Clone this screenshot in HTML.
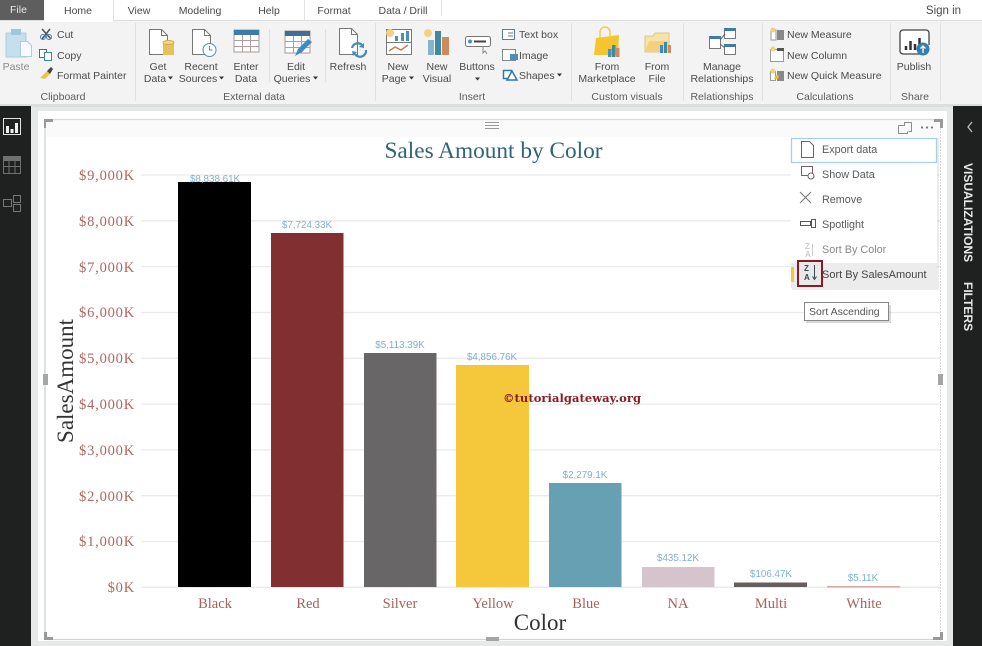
<!DOCTYPE html>
<html><head><meta charset="utf-8">
<style>
html,body{margin:0;padding:0;background:#fff;width:982px;height:646px;overflow:hidden}
svg{display:block;filter:blur(.3px)}
text{font-family:"Liberation Sans",sans-serif}
.r{font-size:10.5px;fill:#4a4a4a;text-anchor:middle}
.l{font-size:10.5px;fill:#4a4a4a}
.g{font-size:10.5px;fill:#5c5c5c;text-anchor:middle}
.t{font-size:10.5px;fill:#4a4a4a;text-anchor:middle}
.y{font-family:"Liberation Serif",serif;font-size:14.5px;letter-spacing:.8px;fill:#b0655d;text-anchor:end}
.x{font-family:"Liberation Serif",serif;font-size:14.5px;fill:#a9605a;text-anchor:middle}
.d{font-size:9.8px;fill:#7fb0cf;text-anchor:middle}
.m{font-size:10.8px;fill:#5a5a5a}
</style></head><body>
<svg width="982" height="646" viewBox="0 0 982 646" xmlns="http://www.w3.org/2000/svg">
<rect width="982" height="646" fill="#e7e9e8"/>
<!-- tabs -->
<rect width="982" height="20" fill="#fff"/>
<rect width="44" height="20" fill="#5e5e5e"/>
<text x="10" y="13" fill="#e8e8e8" style="font-size:10.5px">File</text>
<path d="M113.500 20V0M304.500 20V0M441.500 16V0" stroke="#e2e2e2"/>
<text class="t" x="78" y="14">Home</text><text class="t" x="139" y="14">View</text><text class="t" x="200" y="14">Modeling</text><text class="t" x="269" y="14">Help</text><text class="t" x="334" y="14">Format</text><text class="t" x="403" y="14">Data / Drill</text><text class="t" x="943.500" y="14" style="font-size:11.500px">Sign in</text>
<!-- ribbon -->
<rect y="20" width="982" height="84" fill="#f3f3f3"/>
<rect x="44" y="19" width="69" height="3" fill="#fff"/>
<path d="M0 20.500H44M113 20.500H982" stroke="#dedede"/>
<rect y="104" width="982" height="3" fill="#dcdedd"/>
<path d="M135.500 23V101M375.500 23V101M571.500 23V101M683.500 23V101M762.500 23V101M890.500 23V101M940.500 23V101M269.500 29V82M325.500 29V82" stroke="#e0e0e0"/>
<!-- paste -->
<rect x="6" y="33" width="20" height="24" fill="#c5dfec" stroke="#a9cfe2"/><rect x="11" y="29" width="10" height="6" fill="#9fc8dc"/><path d="M20.500 41.500h7l4 4v11h-11z" fill="#f7fbfd" stroke="#a9cfe2"/>
<text class="g" x="16" y="70" style="fill:#8a8a8a">Paste</text>
<path d="M42 29l9 10M50 29l-8 10" stroke="#555" stroke-width="1.600" fill="none"/><circle cx="43" cy="37" r="2.500" fill="none" stroke="#3f83b5"/><circle cx="49" cy="37" r="2.500" fill="none" stroke="#3f83b5"/>
<text class="l" x="57" y="38">Cut</text>
<rect x="39.500" y="49.500" width="7" height="8" fill="#fff" stroke="#666"/><rect x="44.500" y="52.500" width="7" height="8" fill="#fff" stroke="#3f83b5"/>
<text class="l" x="57" y="59">Copy</text>
<path d="M40 78l7-7 3 3-5 5z" fill="#ecc24a"/><path d="M47 71l4-4 2 2-3 5z" fill="#444"/>
<text class="l" x="57" y="79">Format Painter</text>
<text class="g" x="63" y="100">Clipboard</text>
<!-- get data -->
<path d="M149.500 29.500h12l6 6v19h-18z" fill="#fff" stroke="#777"/><path d="M161.500 29.500v6h6" fill="none" stroke="#777"/><rect x="163" y="42" width="11" height="13" fill="#e8c15f"/><ellipse cx="168.500" cy="42.500" rx="5.500" ry="2" fill="#f3d98f" stroke="#d5aa44"/>
<text class="r" x="158" y="70">Get</text><text class="r" x="155" y="82">Data</text><path d="M168 76.500h5l-2.500 3z" fill="#333"/>
<path d="M192.500 29.500h12l6 6v19h-18z" fill="#fff" stroke="#777"/><path d="M204.500 29.500v6h6" fill="none" stroke="#777"/><circle cx="209.500" cy="50" r="6.500" fill="#fff" stroke="#4a90bd"/><path d="M209.500 46v4h3" stroke="#4a90bd" fill="none"/>
<text class="r" x="201" y="70">Recent</text><text class="r" x="198" y="82">Sources</text><path d="M219 76.500h5l-2.500 3z" fill="#333"/>
<rect x="234" y="30" width="25" height="22" fill="#fff" stroke="#a89a9a"/><rect x="234" y="30" width="25" height="5" fill="#3f7ba6"/><path d="M234 40.500h25M234 46.500h25M242.500 35v17M250.500 35v17" stroke="#b49c9c"/>
<text class="r" x="246" y="70">Enter</text><text class="r" x="246" y="82">Data</text>
<rect x="285" y="31" width="25" height="22" fill="#fff" stroke="#a89a9a"/><rect x="285" y="31" width="25" height="5" fill="#3f6f94"/><path d="M285 41.500h25M285 47.500h25M293.500 36v17M301.500 36v17" stroke="#b49c9c"/><path d="M295 56l3-7 10-10 4 3-10 10z" fill="#3f8ac0"/>
<text class="r" x="296" y="70">Edit</text><text class="r" x="292" y="82">Queries</text><path d="M313 76.500h5l-2.500 3z" fill="#333"/>
<text class="g" x="254" y="100">External data</text>
<!-- refresh -->
<path d="M339.500 28.500h12l6 6v20h-18z" fill="#fff" stroke="#777"/><path d="M351.500 28.500v6h6" fill="none" stroke="#777"/>
<path d="M352 48a6 6 0 0 1 10-3M366 50a6 6 0 0 1-11 4" stroke="#3f8fb8" stroke-width="2.200" fill="#fff" fill-opacity="0"/><path d="M359 47l5 1 0-5zM357 52l-5-1 1 5z" fill="#3f8fb8"/>
<text class="r" x="348" y="70">Refresh</text>
<!-- new page -->
<rect x="386.500" y="29.500" width="25" height="25" fill="#fff" stroke="#777"/><path d="M386 42.500h25" stroke="#777"/><circle cx="390" cy="33" r="4" fill="#f3d184"/><path d="M395 41v-5h3v5zM401 41v-8h3v8zM406 41v-10h3v10z" fill="#4a90bd"/><path d="M389 51l6-4 6 3 7-5" stroke="#c67f55" stroke-width="1.500" fill="none"/>
<text class="r" x="398" y="70">New</text><text class="r" x="394" y="82">Page</text><path d="M409 76.500h5l-2.500 3z" fill="#333"/>
<circle cx="428" cy="33" r="4" fill="#f3d184"/><rect x="428" y="40" width="6" height="15" fill="#84b4cf"/><rect x="435" y="31" width="6" height="24" fill="#3f8a9f"/><rect x="442" y="37" width="7" height="18" fill="#cf8a5f"/>
<text class="r" x="437" y="70">New</text><text class="r" x="437" y="82">Visual</text>
<rect x="465.500" y="36.500" width="25" height="10" rx="2" fill="#fff" stroke="#777"/><circle cx="470" cy="41.500" r="2" fill="#4a90bd"/><path d="M474 41.500h12" stroke="#444" stroke-width="2"/><path d="M483 46v7l2-2 2 3" stroke="#888" fill="none"/>
<text class="r" x="477" y="70">Buttons</text><path d="M475 77.500h5l-2.500 3z" fill="#333"/>
<rect x="502.500" y="29.500" width="12" height="10" fill="#fff" stroke="#5a7f99"/><path d="M508 33h5M508 36h5" stroke="#777"/><text class="l" x="519" y="38">Text box</text>
<rect x="502.500" y="49.500" width="13" height="11" fill="#fff" stroke="#888"/><rect x="510" y="54" width="8" height="6" fill="#4a90bd"/><text class="l" x="519" y="59">Image</text>
<rect x="503.500" y="70.500" width="8" height="8" fill="#fff" stroke="#2f78a8" stroke-width="1.500"/><path d="M507 80l5-9 5 9z" fill="#fff" stroke="#2f78a8" stroke-width="1.500"/><text class="l" x="519" y="79">Shapes</text><path d="M557 73.500h5l-2.500 3z" fill="#333"/>
<text class="g" x="472" y="100">Insert</text>
<!-- from marketplace -->
<path d="M596 38l23-3-1 20h-24z" fill="#f4c52e"/><path d="M600 38v-6a5 5 0 0 1 10 0v5" stroke="#f0cb55" fill="none" stroke-width="1.500"/><rect x="608" y="49" width="3.500" height="8" fill="#4a90bd"/><rect x="612" y="45" width="3.500" height="12" fill="#3f8a9f"/><rect x="616" y="48" width="3.500" height="9" fill="#cf8a5f"/>
<text class="r" x="607" y="70">From</text><text class="r" x="607" y="82">Marketplace</text>
<path d="M645 52V36h8l2-3h14v19z" fill="#f7e2a8" stroke="#d8c48a"/><path d="M645 52l4-11h21l-2 11z" fill="#f4cf7d"/><rect x="660" y="45" width="3" height="8" fill="#3f8ac0"/><rect x="664" y="42" width="3" height="11" fill="#3f8a9f"/><rect x="668" y="45" width="3" height="8" fill="#cf8a5f"/>
<text class="r" x="657" y="70">From</text><text class="r" x="657" y="82">File</text>
<text class="g" x="627" y="100">Custom visuals</text>
<!-- manage rel -->
<rect x="709.500" y="36.500" width="11" height="12" fill="#fff" stroke="#777"/><rect x="709" y="36" width="12" height="3" fill="#3f7ba6"/>
<rect x="724.500" y="28.500" width="11" height="10" fill="#fff" stroke="#777"/><rect x="724" y="28" width="12" height="3" fill="#3f7ba6"/>
<rect x="724.500" y="44.500" width="11" height="10" fill="#fff" stroke="#777"/><rect x="724" y="44" width="12" height="3" fill="#3f7ba6"/>
<path d="M720 40l5-6M720 44l5 4" stroke="#666"/>
<text class="r" x="722" y="70">Manage</text><text class="r" x="722" y="82">Relationships</text>
<text class="g" x="722" y="100">Relationships</text>
<!-- calculations -->
<rect x="771" y="30" width="5" height="10" fill="#fff" stroke="#999"/><rect x="777" y="30" width="7" height="10" fill="#888"/><circle cx="773" cy="30" r="2.500" fill="#f0d27c"/><text class="l" x="787" y="38">New Measure</text>
<rect x="770.500" y="49.500" width="13" height="12" fill="#fff" stroke="#999"/><rect x="777" y="48" width="7" height="3" fill="#555"/><circle cx="773" cy="49" r="2.500" fill="#f0d27c"/><text class="l" x="787" y="59">New Column</text>
<rect x="770.500" y="71.500" width="5" height="9" fill="#fff" stroke="#999"/><rect x="777" y="71" width="7" height="10" fill="#888"/><path d="M774 79l3-5 1 2 2-3-2 6z" fill="#eeba2e"/><circle cx="773" cy="71" r="2.500" fill="#f0d27c"/><text class="l" x="787" y="79">New Quick Measure</text>
<text class="g" x="825" y="100">Calculations</text>
<!-- publish -->
<path d="M921 54h-18a3 3 0 0 1-3-3V33a3 3 0 0 1 3-3h23a3 3 0 0 1 3 3v12" fill="#fff" stroke="#444" stroke-width="1.300"/><path d="M906 50v-4M910.500 50v-9M915 50v-6M919.500 50v-12" stroke="#333" stroke-width="2.500"/><circle cx="923" cy="49" r="6.500" fill="#2f7fb5"/><path d="M923 53v-7M920.500 48.500l2.500-2.500 2.500 2.500" stroke="#fff" stroke-width="1.300" fill="none"/>
<text class="r" x="914" y="70">Publish</text><text class="g" x="915" y="100">Share</text>
<!-- left nav -->
<rect y="106" width="31" height="540" fill="#1f2120"/>
<rect x="3.500" y="118.500" width="17" height="16" fill="none" stroke="#e3e3e3"/><path d="M6 133v-7h3v7zM10.500 133v-4h3v4zM15 133v-10h3v10z" fill="#eee"/>
<rect x="3.500" y="156.500" width="17" height="17" fill="none" stroke="#6f6f6f"/><rect x="3" y="156" width="18" height="5" fill="#707070"/><path d="M3 166.500h18M9 161v13M15 161v13" stroke="#6f6f6f"/>
<rect x="3.500" y="199.500" width="8" height="7" fill="none" stroke="#777"/><rect x="13.500" y="195.500" width="7" height="7" fill="none" stroke="#777"/><rect x="13.500" y="204.500" width="7" height="7" fill="none" stroke="#777"/>
<!-- right pane -->
<rect x="953" y="106" width="29" height="540" fill="#1f2120"/>
<path d="M972 122l-4 5 4 5" stroke="#bdbdbd" stroke-width="1.300" fill="none"/>
<text transform="translate(964 163) rotate(90)" font-weight="bold" fill="#e8e8e8" style="font-size:12px">VISUALIZATIONS</text>
<text transform="translate(964 282) rotate(90)" font-weight="bold" fill="#e8e8e8" style="font-size:12px">FILTERS</text>
<!-- canvas -->
<rect x="38" y="111" width="909" height="530" fill="#fff"/>
<rect x="46" y="120" width="894" height="17" fill="#fafafa"/>
<path d="M45 119.500H940.500" stroke="#dcdcdc" stroke-width="1.300"/>
<path d="M45 119V639" stroke="#dde2e2" stroke-width="2"/>
<path d="M45 639.500H940.500" stroke="#d8d2ce" stroke-width="1.300"/>
<path d="M940.500 119V639" stroke="#d8d6d4" stroke-width="1" stroke-dasharray="2 1"/>
<path d="M46 128v-6h7v-3h-9v9z" fill="#999"/><path d="M934 122h6v6h3v-9h-9z" fill="#999"/><path d="M44 632v8h9v-3h-6v-5z" fill="#999"/><path d="M933 637h7v-5h3v8h-10z" fill="#999"/>
<rect x="43" y="374" width="5" height="11" fill="#a5a5a5"/><rect x="938" y="374" width="5" height="11" fill="#a5a5a5"/><rect x="486" y="637" width="13" height="4" fill="#a5a5a5"/>
<path d="M485 122.500h14M485 125.500h14M485 128.500h14" stroke="#999"/>
<path d="M898.500 125.500h6v-3h7v9h-3M898.500 125.500v8h9v-2" fill="none" stroke="#8d8d8d"/>
<circle cx="922" cy="127.500" r="1.100" fill="#777"/><circle cx="927" cy="127.500" r="1.100" fill="#777"/><circle cx="932" cy="127.500" r="1.100" fill="#777"/>
<!-- gridlines -->
<g stroke="#eaeaea" stroke-width="1.300">
<path d="M141 175H940M141 220.800H940M141 266.600H940M141 312.500H940M141 358.300H940M141 404.100H940M141 449.900H940M141 495.700H940M141 541.500H940M141 587.300H940"/>
</g>
<text x="493.500" y="158" text-anchor="middle" fill="#2f6479" style="font-family:'Liberation Serif',serif;font-size:23.300px">Sales Amount by Color</text>
<g>
<text class="y" x="135" y="180">$9,000K</text><text class="y" x="135" y="226">$8,000K</text><text class="y" x="135" y="272">$7,000K</text><text class="y" x="135" y="317">$6,000K</text><text class="y" x="135" y="363">$5,000K</text><text class="y" x="135" y="409">$4,000K</text><text class="y" x="135" y="455">$3,000K</text><text class="y" x="135" y="501">$2,000K</text><text class="y" x="135" y="546">$1,000K</text><text class="y" x="135" y="592">$0K</text>
</g>
<text transform="translate(73 381) rotate(-90)" text-anchor="middle" fill="#333" style="font-family:'Liberation Serif',serif;font-size:23px">SalesAmount</text>
<!-- bars -->
<rect x="178" y="182" width="73" height="405" fill="#000"/>
<rect x="271" y="233" width="72.500" height="354" fill="#822f32"/>
<rect x="364" y="353" width="72.500" height="234" fill="#686666"/>
<rect x="456" y="365" width="73" height="222" fill="#f5c73b"/>
<rect x="549" y="483" width="72.500" height="104" fill="#66a0b2"/>
<rect x="642" y="567" width="72.500" height="20" fill="#d6c4cd"/>
<rect x="734" y="582.500" width="73" height="4.500" fill="#685e5e"/>
<rect x="827" y="586" width="73" height="1.500" fill="#d9a89e"/>
<text class="d" x="215" y="182">$8,838.61K</text><text class="d" x="307" y="228">$7,724.33K</text><text class="d" x="400" y="348">$5,113.39K</text><text class="d" x="492" y="360">$4,856.76K</text><text class="d" x="585" y="478">$2,279.1K</text><text class="d" x="678" y="561">$435.12K</text><text class="d" x="771" y="577">$106.47K</text><text class="d" x="863" y="581">$5.11K</text>
<text class="x" x="215" y="608">Black</text><text class="x" x="308" y="608">Red</text><text class="x" x="400" y="608">Silver</text><text class="x" x="493" y="608">Yellow</text><text class="x" x="586" y="608">Blue</text><text class="x" x="678" y="608">NA</text><text class="x" x="771" y="608">Multi</text><text class="x" x="864" y="608">White</text>
<text x="540" y="630" text-anchor="middle" fill="#333" style="font-family:'Liberation Serif',serif;font-size:23px">Color</text>
<text x="503" y="402" fill="#8a1c24" textLength="138" style="font-family:'DejaVu Serif',serif;font-size:11.500px;font-weight:bold">©tutorialgateway.org</text>
<!-- menu -->
<rect x="792" y="138" width="147" height="152" fill="#000" opacity=".07"/>
<rect x="791" y="137" width="146" height="151" fill="#fff"/>
<rect x="791.500" y="138.500" width="145" height="24" fill="#fff" stroke="#a9d0e6" stroke-width="1.300"/>
<rect x="791" y="263" width="146" height="25" fill="#ececec"/>
<path d="M801.500 141.500h8l4 4v12h-12z" fill="#fff" stroke="#666"/>
<rect x="801.500" y="166.500" width="11" height="9" fill="#fff" stroke="#8a5a5a"/><circle cx="811" cy="176" r="3" fill="#fff" stroke="#666"/>
<path d="M800 192l11 11M811 192l-11 11" stroke="#777"/>
<rect x="800.500" y="221.500" width="10" height="4" fill="#fff" stroke="#555"/><rect x="811.500" y="219.500" width="4" height="8" fill="#fff" stroke="#555"/>
<text x="805" y="249" fill="#ccc" style="font-size:8px;font-weight:bold">Z</text><text x="805" y="257" fill="#ccc" style="font-size:8px;font-weight:bold">A</text><path d="M812.500 244v12" stroke="#ccc"/>
<text class="m" x="822" y="153">Export data</text><text class="m" x="822" y="178">Show Data</text><text class="m" x="822" y="203">Remove</text><text class="m" x="822" y="228">Spotlight</text><text class="m" x="822" y="253" style="fill:#888">Sort By Color</text><text class="m" x="822" y="278" style="fill:#444;font-size:11px">Sort By SalesAmount</text>
<rect x="791" y="267" width="3" height="15" fill="#f5c73b"/>
<rect x="798" y="261" width="24" height="25" fill="#e9e9e9" stroke="#8b1a28" stroke-width="2"/>
<text x="804" y="271" fill="#3a4a55" style="font-size:8px;font-weight:bold">Z</text><text x="804" y="280" fill="#3a4a55" style="font-size:8px;font-weight:bold">A</text><path d="M814.500 265v14M812.500 276.500l2 3 2-3" stroke="#3a4a55" fill="none"/>
<!-- tooltip -->
<rect x="806" y="305" width="85" height="18" fill="#000" opacity=".15"/>
<rect x="804.500" y="302.500" width="84" height="18" fill="#fff" stroke="#888"/>
<text x="809" y="315" fill="#555" style="font-size:10.500px">Sort Ascending</text>
</svg>
</body></html>
